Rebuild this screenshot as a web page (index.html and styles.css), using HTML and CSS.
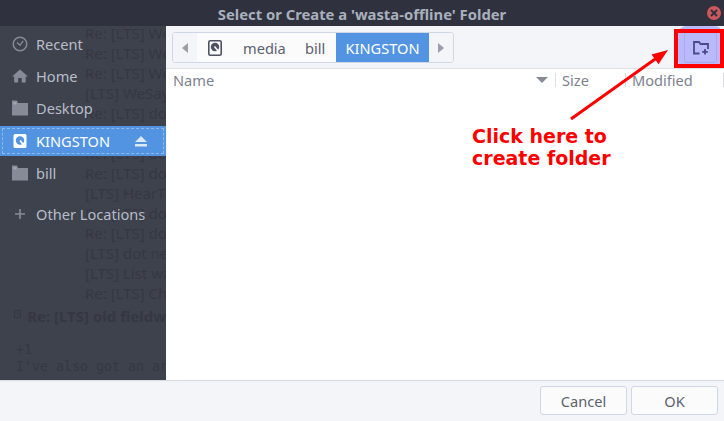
FILE: index.html
```html
<!DOCTYPE html>
<html lang="en">
<head>
    <meta charset="UTF-8">
    <meta name="viewport" content="width=device-width, initial-scale=1.0">
    <title>Select or Create a 'wasta-offline' Folder</title>
    <link rel="stylesheet" href="styles.css">
</head>
<body>
<div class="dialog">
    <div class="titlebar">
        <span class="title">Select or Create a 'wasta-offline' Folder</span>
        <span class="close">
            <svg width="8" height="8" viewBox="0 0 8 8"><path d="M1 1l6 6M7 1l-6 6" stroke="#2f323e" stroke-width="2"/></svg>
        </span>
    </div>

    <div class="main">
        <div class="sidebar">
            <!-- window behind the dialog, shows through -->
            <div class="behind">
                <div class="behind-list">
                    <div>Re: [LTS] WeSay</div>
                    <div>Re: [LTS] WeSay</div>
                    <div>Re: [LTS] WeSay</div>
                    <div>[LTS] WeSay</div>
                    <div>Re: [LTS] dot</div>
                    <div>Re: [LTS] dot</div>
                    <div>Re: [LTS] dot</div>
                    <div>Re: [LTS] dot</div>
                    <div>[LTS] HearThis</div>
                    <div>Re: [LTS] dot</div>
                    <div>Re: [LTS] dot</div>
                    <div>[LTS] dot net</div>
                    <div>[LTS] List wa</div>
                    <div>Re: [LTS] Cha</div>
                </div>
                <div class="behind-head"><span class="behind-plus">+</span><b>Re: [LTS] old fieldworks</b></div>
                <div class="behind-mono">+1
I've also got an ar
                            I'd</div>
            </div>

            <ul class="places">
                <li class="place">
                    <svg class="place-icon" viewBox="0 0 16 16"><circle cx="8" cy="8" r="6.8" fill="none" stroke="#868b97" stroke-width="1.5"/><path d="M5 6.5L8 9.2L11.2 4.8" fill="none" stroke="#868b97" stroke-width="1.3"/></svg>
                    <span>Recent</span>
                </li>
                <li class="place">
                    <svg class="place-icon" viewBox="0 0 16 16"><path d="M8 1.5L0 8.5h2.2v6h4v-4.5h3.5v4.5h4v-6H16z" fill="#868b97"/></svg>
                    <span>Home</span>
                </li>
                <li class="place">
                    <svg class="place-icon" viewBox="0 0 16 16"><path d="M0 0.5h5l1 2.5h10V15.5H0z" fill="#868b97"/><path d="M1.5 2h3v2.5h-3z" fill="#a0a4ae"/></svg>
                    <span>Desktop</span>
                </li>
                <li class="place place-selected">
                    <svg class="place-icon" viewBox="0 0 16 16"><rect x="1.5" y="1" width="13" height="14" rx="1.5" fill="#fff"/><circle cx="8" cy="7.5" r="4.2" fill="#5294e2"/><path d="M8 7.5l4 5" stroke="#fff" stroke-width="1.8"/></svg>
                    <span class="place-name">KINGSTON</span>
                    <svg class="eject" viewBox="0 0 12 11"><path d="M6 0l6 6H0zM0 8h12v2.5H0z" fill="#dbe8f8"/></svg>
                </li>
                <li class="place">
                    <svg class="place-icon" viewBox="0 0 16 16"><path d="M0 0.5h5l1 2.5h10V15.5H0z" fill="#868b97"/><path d="M1.5 2h3v2.5h-3z" fill="#a0a4ae"/></svg>
                    <span>bill</span>
                </li>
                <li class="place place-other">
                    <svg class="place-icon" viewBox="0 0 16 16"><path d="M8 3v10M3 8h10" stroke="#868b97" stroke-width="1.6"/></svg>
                    <span>Other Locations</span>
                </li>
            </ul>
        </div>

        <div class="content">
            <div class="toolbar">
                <div class="pathbar">
                    <span class="path-arrow path-arrow-left"><svg width="6" height="10" viewBox="0 0 6 10"><path d="M6 0v10L0 5z" fill="#9a9ea8"/></svg></span>
                    <span class="path-item path-drive">
                        <svg width="14" height="16" viewBox="0 0 14 16"><rect x="0.8" y="0.8" width="12.4" height="14.4" rx="1.5" fill="#f9fafb" stroke="#4d5163" stroke-width="1.6"/><circle cx="7" cy="7" r="4.2" fill="#4d5163"/><path d="M6.5 6.5l4 5" stroke="#f9fafb" stroke-width="1.6"/></svg>
                    </span>
                    <span class="path-item path-media">media</span>
                    <span class="path-item path-bill">bill</span>
                    <span class="path-item path-current">KINGSTON</span>
                    <span class="path-arrow path-arrow-right"><svg width="6" height="10" viewBox="0 0 6 10"><path d="M0 0v10l6-5z" fill="#9a9ea8"/></svg></span>
                </div>
                <div class="new-folder">
                    <svg width="16" height="14" viewBox="0 0 16 14"><path d="M6.5 12.5H1V1h5l1.5 2H15v5" fill="none" stroke="#4a4a86" stroke-width="1.8"/><path d="M12 8v5.5M9.2 10.8h5.6" stroke="#4a4a86" stroke-width="1.8"/></svg>
                </div>
            </div>

            <div class="list-header">
                <div class="col col-name">Name<svg class="sort" width="12" height="6" viewBox="0 0 12 6"><path d="M0 0h12L6 6z" fill="#868b97"/></svg></div>
                <div class="col col-size">Size</div>
                <div class="col col-modified">Modified</div>
            </div>
            <div class="list-body"></div>
        </div>
    </div>

    <div class="footer">
        <button class="btn">Cancel</button>
        <button class="btn">OK</button>
    </div>
</div>

<!-- annotation drawn on the screenshot -->
<div class="note-box"></div>
<svg class="note-arrow" width="724" height="421" viewBox="0 0 724 421">
    <path d="M571 119L658 57" stroke="#f00" stroke-width="3" fill="none"/>
    <path d="M668 50L651.500 54.400L658.500 64.200z" fill="#f00"/>
</svg>
<div class="note-text">Click here to<br>create folder</div>
</body>
</html>
```

FILE: styles.css
```css
* {
    box-sizing: border-box;
}

body {
    margin: 0;
    width: 724px;
    height: 421px;
    overflow: hidden;
    position: relative;
    font-family: "Noto Sans", sans-serif;
    font-size: 14.6px;
    color: #5c616c;
}

.dialog {
    display: flex;
    flex-direction: column;
    height: 421px;
}

/* title bar */
.titlebar {
    position: relative;
    flex: none;
    height: 26px;
    background-color: #2f323e;
    display: flex;
    align-items: center;
    justify-content: center;
}

.title {
    font-weight: 700;
    font-size: 14.8px;
    color: #a9b0bd;
    margin-top: 1px;
}

.close {
    position: absolute;
    right: 3px;
    top: 6px;
    width: 14px;
    height: 14px;
    border-radius: 50%;
    background-color: #cc575d;
    display: flex;
    align-items: center;
    justify-content: center;
}

.main {
    flex: 1;
    display: flex;
    min-height: 0;
}

/* sidebar */
.sidebar {
    position: relative;
    flex: none;
    width: 166px;
    background-color: #3e424d;
    overflow: hidden;
}

.behind {
    position: absolute;
    left: 0;
    top: 0;
    width: 166px;
    height: 354px;
    overflow: hidden;
    color: #353842;
    white-space: nowrap;
}

.behind-list {
    padding: 0 0 0 85px;
    line-height: 20px;
    margin-top: -3px;
    font-size: 15px;
}

.behind-head {
    margin-top: 3px;
    padding-left: 14px;
    font-size: 15px;
    display: flex;
    align-items: center;
    line-height: 20px;
}

.behind-plus {
    width: 8px;
    height: 8px;
    border: 1px solid #353842;
    font-size: 9px;
    line-height: 6px;
    text-align: center;
    margin-right: 6px;
    margin-top: -4px;
}

.behind-mono {
    margin-top: 15px;
    padding-left: 16px;
    font-family: "DejaVu Sans Mono", monospace;
    font-size: 13.3px;
    line-height: 17px;
    white-space: pre;
}

.places {
    position: relative;
    list-style: none;
    margin: 2px 0 0 0;
    padding: 0;
}

.place {
    display: flex;
    align-items: center;
    height: 32px;
    padding-left: 12px;
    color: #b7bdc9;
}

.place-icon {
    flex: none;
    width: 16px;
    height: 16px;
    margin-right: 8px;
}

.place-selected {
    background-color: #5294e2;
    color: #fff;
    height: 30px;
    margin-top: 2px;
    margin-bottom: 1px;
    outline: 1px dashed #8fbaee;
    outline-offset: -3px;
}

.place-name {
    flex: 1;
}

.eject {
    width: 12px;
    height: 11px;
    margin-right: 19px;
}

.place-other {
    margin-top: 9px;
}

/* right side */
.content {
    flex: 1;
    display: flex;
    flex-direction: column;
    background-color: #fff;
}

.toolbar {
    flex: none;
    height: 43px;
    background-color: #f4f5f8;
    border-bottom: 1px solid #dcdfe3;
    display: flex;
    align-items: flex-start;
    justify-content: space-between;
    padding: 6px 7px 0 6px;
    overflow: hidden;
}

.pathbar {
    display: flex;
    height: 31px;
    border: 1px solid #cfd6e6;
    border-radius: 3px;
    background-color: #fbfbfc;
    overflow: hidden;
}

.path-arrow {
    width: 24px;
    display: flex;
    align-items: center;
    justify-content: center;
    background-color: #f4f5f8;
}

.path-item {
    display: flex;
    align-items: center;
}

.path-drive {
    padding: 0 0 0 11px;
}

.path-media {
    margin-left: 21px;
    width: 62px;
}

.path-bill {
    width: 31px;
}

.path-current {
    width: 93px;
    justify-content: center;
    background-color: #5294e2;
    color: #fff;
    margin-top: -1px;
    margin-bottom: -1px;
}

.new-folder {
    width: 33px;
    height: 31px;
    background-color: #b9b9fb;
    border: 1px solid #a9a9ec;
    border-radius: 3px;
    box-shadow: 0 0 0 6px #b9b9fb;
    display: flex;
    align-items: center;
    justify-content: center;
}

.list-header {
    flex: none;
    height: 22px;
    display: flex;
    align-items: center;
    background-color: #fff;
    color: #7d8290;
}

.col {
    height: 14px;
    display: flex;
    align-items: center;
    padding-left: 6px;
    border-right: 1px solid #dcdfe3;
}

.col-name {
    width: 390px;
    justify-content: space-between;
    padding-right: 7px;
    padding-left: 7px;
}

.col-size {
    width: 70px;
}

.col-modified {
    flex: 1;
    padding-left: 6px;
}

.list-body {
    flex: 1;
}

/* buttons */
.footer {
    flex: none;
    height: 41px;
    background-color: #f4f5f8;
    border-top: 1px solid #d8dbe4;
    display: flex;
    justify-content: flex-end;
    gap: 4px;
    padding: 5px 6px 0 0;
}

.btn {
    width: 87px;
    height: 29px;
    font-family: "Noto Sans", sans-serif;
    font-size: 14.6px;
    color: #5c616c;
    background-color: #fbfbfc;
    border: 1px solid #cfd6e6;
    border-radius: 3px;
    padding: 0;
}

/* annotation */
.note-box {
    position: absolute;
    left: 674px;
    top: 29px;
    width: 50px;
    height: 39px;
    border: 4px solid #f00;
}

.note-arrow {
    position: absolute;
    left: 0;
    top: 0;
}

.note-text {
    position: absolute;
    left: 472px;
    top: 125px;
    font-family: "DejaVu Sans", sans-serif;
    font-weight: 700;
    font-size: 19px;
    line-height: 22px;
    color: #f00;
}
```
